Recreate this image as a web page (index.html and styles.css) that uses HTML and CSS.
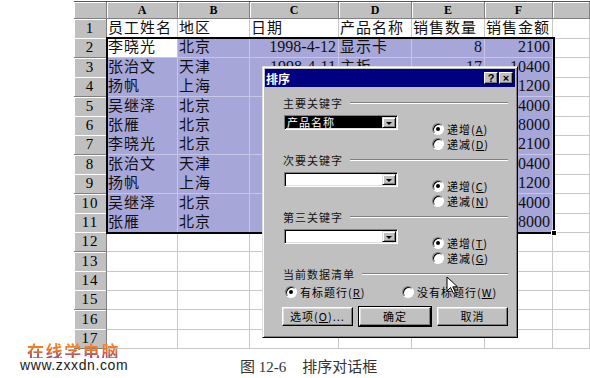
FILE: index.html
```html
<!DOCTYPE html>
<html lang="zh-CN">
<head>
    <meta charset="UTF-8">
    <title>排序对话框</title>
    <link rel="stylesheet" href="styles.css">
</head>
<body>
<div class="page">

    <div class="sheet">
        <div class="row head">
            <div class="col"></div>
            <div class="col">A</div>
            <div class="col">B</div>
            <div class="col">C</div>
            <div class="col">D</div>
            <div class="col">E</div>
            <div class="col">F</div>
            <div class="col"></div>
        </div>
        <div class="row">
            <div class="num">1</div>
            <div class="cell">员工姓名</div>
            <div class="cell">地区</div>
            <div class="cell">日期</div>
            <div class="cell">产品名称</div>
            <div class="cell">销售数量</div>
            <div class="cell">销售金额</div>
            <div class="cell"></div>
        </div>
        <div class="row">
            <div class="num">2</div>
            <div class="cell">李晓光</div>
            <div class="cell sel">北京</div>
            <div class="cell sel n">1998-4-12</div>
            <div class="cell sel">显示卡</div>
            <div class="cell sel n">8</div>
            <div class="cell sel n">2100</div>
            <div class="cell"></div>
        </div>
        <div class="row">
            <div class="num">3</div>
            <div class="cell sel">张治文</div>
            <div class="cell sel">天津</div>
            <div class="cell sel n">1998-4-11</div>
            <div class="cell sel">主板</div>
            <div class="cell sel n">17</div>
            <div class="cell sel n">10400</div>
            <div class="cell"></div>
        </div>
        <!-- columns C:E of rows 4-11 sit under the dialog -->
        <div class="row">
            <div class="num">4</div>
            <div class="cell sel">扬帆</div>
            <div class="cell sel">上海</div>
            <div class="cell sel"></div>
            <div class="cell sel"></div>
            <div class="cell sel"></div>
            <div class="cell sel n">1200</div>
            <div class="cell"></div>
        </div>
        <div class="row">
            <div class="num">5</div>
            <div class="cell sel">吴继泽</div>
            <div class="cell sel">北京</div>
            <div class="cell sel"></div>
            <div class="cell sel"></div>
            <div class="cell sel"></div>
            <div class="cell sel n">24000</div>
            <div class="cell"></div>
        </div>
        <div class="row">
            <div class="num">6</div>
            <div class="cell sel">张雁</div>
            <div class="cell sel">北京</div>
            <div class="cell sel"></div>
            <div class="cell sel"></div>
            <div class="cell sel"></div>
            <div class="cell sel n">28000</div>
            <div class="cell"></div>
        </div>
        <div class="row">
            <div class="num">7</div>
            <div class="cell sel">李晓光</div>
            <div class="cell sel">北京</div>
            <div class="cell sel"></div>
            <div class="cell sel"></div>
            <div class="cell sel"></div>
            <div class="cell sel n">2100</div>
            <div class="cell"></div>
        </div>
        <div class="row">
            <div class="num">8</div>
            <div class="cell sel">张治文</div>
            <div class="cell sel">天津</div>
            <div class="cell sel"></div>
            <div class="cell sel"></div>
            <div class="cell sel"></div>
            <div class="cell sel n">10400</div>
            <div class="cell"></div>
        </div>
        <div class="row">
            <div class="num">9</div>
            <div class="cell sel">扬帆</div>
            <div class="cell sel">上海</div>
            <div class="cell sel"></div>
            <div class="cell sel"></div>
            <div class="cell sel"></div>
            <div class="cell sel n">1200</div>
            <div class="cell"></div>
        </div>
        <div class="row">
            <div class="num">10</div>
            <div class="cell sel">吴继泽</div>
            <div class="cell sel">北京</div>
            <div class="cell sel"></div>
            <div class="cell sel"></div>
            <div class="cell sel"></div>
            <div class="cell sel n">24000</div>
            <div class="cell"></div>
        </div>
        <div class="row">
            <div class="num">11</div>
            <div class="cell sel">张雁</div>
            <div class="cell sel">北京</div>
            <div class="cell sel"></div>
            <div class="cell sel"></div>
            <div class="cell sel"></div>
            <div class="cell sel n">28000</div>
            <div class="cell"></div>
        </div>
        <div class="row">
            <div class="num">12</div>
            <div class="cell"></div><div class="cell"></div><div class="cell"></div><div class="cell"></div><div class="cell"></div><div class="cell"></div><div class="cell"></div>
        </div>
        <div class="row">
            <div class="num">13</div>
            <div class="cell"></div><div class="cell"></div><div class="cell"></div><div class="cell"></div><div class="cell"></div><div class="cell"></div><div class="cell"></div>
        </div>
        <div class="row">
            <div class="num">14</div>
            <div class="cell"></div><div class="cell"></div><div class="cell"></div><div class="cell"></div><div class="cell"></div><div class="cell"></div><div class="cell"></div>
        </div>
        <div class="row">
            <div class="num">15</div>
            <div class="cell"></div><div class="cell"></div><div class="cell"></div><div class="cell"></div><div class="cell"></div><div class="cell"></div><div class="cell"></div>
        </div>
        <div class="row">
            <div class="num">16</div>
            <div class="cell"></div><div class="cell"></div><div class="cell"></div><div class="cell"></div><div class="cell"></div><div class="cell"></div><div class="cell"></div>
        </div>
        <div class="row">
            <div class="num">17</div>
            <div class="cell"></div><div class="cell"></div><div class="cell"></div><div class="cell"></div><div class="cell"></div><div class="cell"></div><div class="cell"></div>
        </div>

        <!-- selected range A2:F11 -->
        <div class="selection"><span class="handle"></span></div>
    </div>

    <div class="dialog">
        <div class="titlebar">
            <span class="title">排序</span>
            <span class="tbtn help">?</span>
            <span class="tbtn">×</span>
        </div>
        <div class="dlg-body">
            <div class="legend"><span>主要关键字</span></div>
            <div class="key-row">
                <div class="combo"><span class="field on">产品名称</span><span class="drop"></span></div>
                <div class="radios">
                    <div class="radio"><span class="dot on"></span>递增(<u>A</u>)</div>
                    <div class="radio"><span class="dot"></span>递减(<u>D</u>)</div>
                </div>
            </div>

            <div class="legend"><span>次要关键字</span></div>
            <div class="key-row">
                <div class="combo"><span class="field"></span><span class="drop"></span></div>
                <div class="radios">
                    <div class="radio"><span class="dot on"></span>递增(<u>C</u>)</div>
                    <div class="radio"><span class="dot"></span>递减(<u>N</u>)</div>
                </div>
            </div>

            <div class="legend"><span>第三关键字</span></div>
            <div class="key-row">
                <div class="combo"><span class="field"></span><span class="drop"></span></div>
                <div class="radios">
                    <div class="radio"><span class="dot on"></span>递增(<u>T</u>)</div>
                    <div class="radio"><span class="dot"></span>递减(<u>G</u>)</div>
                </div>
            </div>

            <div class="legend"><span>当前数据清单</span></div>
            <div class="list-row">
                <div class="radio"><span class="dot on"></span>有标题行(<u>R</u>)</div>
                <div class="radio"><span class="dot"></span>没有标题行(<u>W</u>)</div>
            </div>

            <div class="buttons">
                <div class="btn">选项(<u>O</u>)...</div>
                <div class="btn default">确定</div>
                <div class="btn">取消</div>
            </div>
        </div>
    </div>

    <svg class="cursor" width="14" height="19" viewBox="0 0 14 19">
        <path d="M1 1 L1 15 L4.5 11.5 L7.5 17.5 L9.5 16.5 L6.8 10.8 L11.5 10.8 Z" fill="#fff" stroke="#000" stroke-width="1" stroke-linejoin="round"/>
    </svg>

    <footer class="footer">
        <div class="logo">
            <span class="brand">在线学电脑</span>
            <span class="site">www.zxxdn.com</span>
        </div>
        <p class="caption">图 12-6<span class="caption-title">排序对话框</span></p>
    </footer>

</div>
</body>
</html>
```

FILE: styles.css
```css
/* Global */
* {
    box-sizing: border-box;
}

body {
    margin: 0;
    background: #fff;
    color: #111;
    font-family: "Liberation Serif", "Noto Sans CJK SC", serif;
    overflow: hidden;
}

.page {
    position: relative;
    width: 590px;
    height: 378px;
    overflow: hidden;
}

/* Worksheet */
.sheet {
    position: relative;
    width: 516px;
    margin: 1px 0 0 74px;
    border-top: 1px solid #555;
}

.row {
    display: grid;
    grid-template-columns: 33px 71px 72px 89px 73px 73px 68px 37px;
    height: 19.4px;
}

.row.head {
    height: 17px;
}

.col, .num {
    background: #c0c0c0;
    border-right: 1px solid #808080;
    border-bottom: 1px solid #808080;
    box-shadow: inset 1px 1px #fff;
    color: #000;
    text-align: center;
}

.col {
    font-size: 12px;
    font-weight: bold;
    line-height: 16px;
}

.num {
    font-size: 15px;
    line-height: 19px;
    letter-spacing: 1px;
}

.cell {
    border-right: 1px solid #c8c8c8;
    border-bottom: 1px solid #c8c8c8;
    padding-left: 1px;
    font-size: 15px;
    line-height: 18px;
    letter-spacing: 1px;
    white-space: nowrap;
    overflow: hidden;
}

.cell.n {
    text-align: right;
    padding-right: 2px;
    font-size: 16px;
    letter-spacing: 0;
}

.cell.sel {
    background: #a6a6d8;
    border-color: #c6c6e6;
}

.selection {
    position: absolute;
    left: 32px;
    top: 35px;
    width: 449px;
    height: 197px;
    border: 2px solid #000;
}

.handle {
    position: absolute;
    right: -4px;
    bottom: -4px;
    width: 6px;
    height: 6px;
    background: #000;
    border: 1px solid #fff;
}

/* Sort dialog */
.dialog {
    position: absolute;
    left: 262px;
    top: 66px;
    width: 256px;
    height: 272px;
    padding: 2px;
    background: #c0c0c0;
    border: 1px solid;
    border-color: #dfdfdf #000 #000 #dfdfdf;
    box-shadow: inset 1px 1px #fff, inset -1px -1px #808080;
    color: #000;
    font-family: "Noto Sans CJK SC", sans-serif;
    font-size: 11px;
    letter-spacing: 1px;
}

.titlebar {
    display: flex;
    align-items: center;
    height: 18px;
    padding: 0 2px 0 1px;
    background: #000080;
}

.title {
    color: #fff;
    font-size: 12px;
    font-weight: bold;
    letter-spacing: 0;
}

.tbtn {
    width: 14px;
    height: 12px;
    margin-left: 1px;
    background: #c0c0c0;
    border: 1px solid;
    border-color: #fff #000 #000 #fff;
    box-shadow: inset -1px -1px #808080;
    font: bold 11px/10px "Liberation Sans", sans-serif;
    letter-spacing: 0;
    text-align: center;
}

.tbtn.help {
    margin-left: auto;
}

.dlg-body {
    padding: 9px 7px 0 17px;
}

.legend {
    display: flex;
    align-items: center;
    height: 14px;
    margin-left: 1px;
    color: #111;
}

.legend::after {
    content: "";
    flex: 1;
    margin-left: 7px;
    border-top: 1px solid #808080;
    border-bottom: 1px solid #fff;
}

.key-row {
    display: grid;
    grid-template-columns: 114px auto;
    column-gap: 34px;
    margin: 5px 0 2px 2px;
}

.combo {
    display: flex;
    height: 15px;
    padding: 1px;
    background: #fff;
    border: 1px solid;
    border-color: #808080 #fff #fff #808080;
    box-shadow: inset 1px 1px #000, inset -1px -1px #dfdfdf;
}

.field {
    flex: 1;
    padding-left: 1px;
    color: #fff;
    font-size: 11px;
    line-height: 11px;
}

.field.on {
    background: #000;
}

.drop {
    position: relative;
    width: 14px;
    background: #c0c0c0;
    border: 1px solid;
    border-color: #dfdfdf #000 #000 #dfdfdf;
    box-shadow: inset 1px 1px #fff, inset -1px -1px #808080;
}

.drop::after {
    content: "";
    position: absolute;
    left: 50%;
    top: 50%;
    margin: -1px 0 0 -3px;
    border: 3px solid transparent;
    border-top-color: #000;
    border-bottom: 0;
}

.radios {
    padding-top: 6px;
}

.radio {
    display: flex;
    align-items: center;
    height: 15px;
    white-space: nowrap;
}

.dot {
    position: relative;
    flex: none;
    width: 12px;
    height: 12px;
    margin-right: 3px;
    background: #fff;
    border: 1px solid;
    border-color: #808080 #fff #fff #808080;
    border-radius: 50%;
    box-shadow: inset 1px 1px #000;
}

.dot.on::after {
    content: "";
    position: absolute;
    left: 3px;
    top: 3px;
    width: 4px;
    height: 4px;
    background: #000;
    border-radius: 50%;
}

.list-row {
    display: grid;
    grid-template-columns: 117px auto;
    margin: 3px 0 0 3px;
}

.buttons {
    display: grid;
    grid-template-columns: 71px 72px 71px;
    column-gap: 6px;
    margin-top: 8px;
}

.btn {
    height: 19px;
    background: #c0c0c0;
    border: 1px solid;
    border-color: #fff #000 #000 #fff;
    box-shadow: inset -1px -1px #808080, inset 1px 1px #dfdfdf;
    line-height: 17px;
    text-align: center;
}

.btn.default {
    outline: 1px solid #000;
}

.cursor {
    position: absolute;
    left: 446px;
    top: 276px;
}

/* Footer: site logo and figure caption */
.footer {
    position: relative;
    display: flex;
    margin-top: -6px;
}

.logo {
    width: 240px;
    padding-left: 20px;
}

.brand {
    display: block;
    width: max-content;
    margin-left: 7px;
    font: bold 17px/15px "Noto Sans CJK SC", sans-serif;
    letter-spacing: 1.6px;
    background: linear-gradient(180deg, #f5892a 0%, #e8742a 50%, #9a4c8c 100%);
    -webkit-background-clip: text;
    background-clip: text;
    color: transparent;
}

.site {
    display: block;
    color: #1a1a1a;
    font: 14px/15px "Liberation Sans", sans-serif;
    letter-spacing: 0.6px;
}

.caption {
    margin: 16px 0 0;
    color: #333;
    font: 15px/16px "Liberation Serif", "Noto Sans CJK SC", serif;
}

.caption-title {
    margin-left: 16px;
}
```
